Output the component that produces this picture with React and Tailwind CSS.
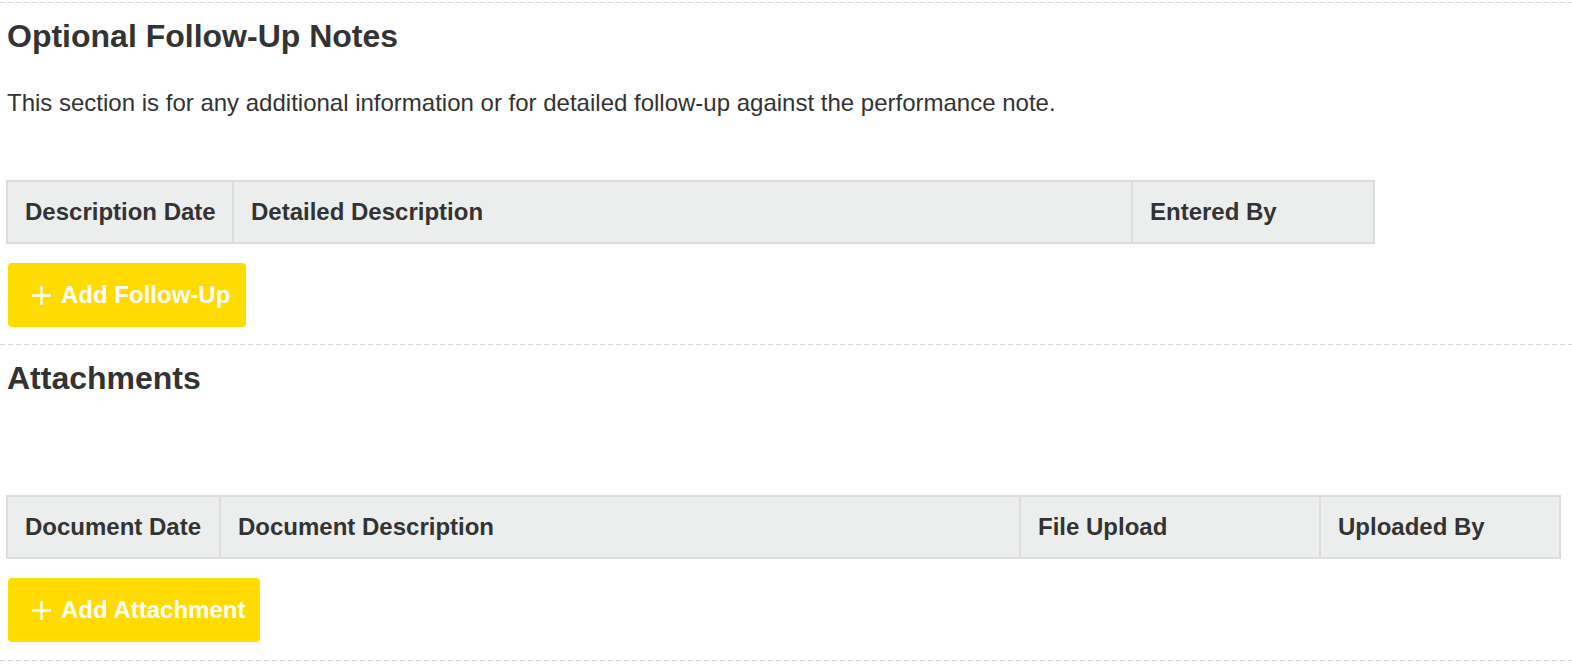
import React from 'react';

const followUpCols = [
    { label: 'Description Date', width: 'w-[226px]' },
    { label: 'Detailed Description', width: 'w-[899px]' },
    { label: 'Entered By', width: 'w-[242px]' },
];

const attachmentCols = [
    { label: 'Document Date', width: 'w-[213px]' },
    { label: 'Document Description', width: 'w-[800px]' },
    { label: 'File Upload', width: 'w-[300px]' },
    { label: 'Uploaded By', width: 'w-[240px]' },
];

const PlusIcon = () => (
    <svg width="21" height="21" viewBox="0 0 21 21" className="shrink-0">
        <path d="M10.5 1v19M1 10.5h19" stroke="#ffffff" strokeWidth="2.4" fill="none" />
    </svg>
);

// dashed separator between sections
const Divider = () => (
    <div className="h-px w-full bg-[repeating-linear-gradient(to_right,#d6d6de_0_5px,transparent_5px_8px)]" />
);

const HeaderTable = ({ columns, tableWidth }) => (
    <table className={`ml-[6px] border-collapse border-2 border-[#dddddd] table-fixed ${tableWidth}`}>
        <thead>
            <tr className="bg-[#eceeed] h-[62px]">
                {columns.map((col) => (
                    <th
                        key={col.label}
                        className={`${col.width} border-2 border-[#dddddd] px-[17px] text-left align-middle text-[24px] font-bold text-[#333333] whitespace-nowrap`}
                    >
                        {col.label}
                    </th>
                ))}
            </tr>
        </thead>
    </table>
);

const AddButton = ({ label, width }) => (
    <button
        type="button"
        className={`ml-[8px] flex h-[64px] items-center gap-[9px] rounded-[4px] bg-[#ffdb00] pl-[23px] text-[24px] font-bold text-white ${width}`}
    >
        <PlusIcon />
        <span>{label}</span>
    </button>
);

export default function App() {
    return (
        <div className="min-h-screen bg-white pt-[2px] text-[#333333] font-['Liberation_Sans',Arial,sans-serif]">
            <Divider />
            {/* Follow-up notes */}
            <section className="pb-[17px]">
                <h2 className="ml-[7px] mt-[16px] text-[32px] leading-[34px] font-bold">Optional Follow-Up Notes</h2>
                <p className="ml-[7px] mt-[33px] text-[24px] leading-[34px]">
                    This section is for any additional information or for detailed follow-up against the performance note.
                </p>
                <div className="mt-[60px]">
                    <HeaderTable columns={followUpCols} tableWidth="w-[1367px]" />
                </div>
                <div className="mt-[19px]">
                    <AddButton label="Add Follow-Up" width="w-[238px]" />
                </div>
            </section>
            <Divider />

            {/* Attachments */}
            <section className="pb-[18px]">
                <h2 className="ml-[7px] mt-[16px] text-[32px] leading-[34px] font-bold">Attachments</h2>
                <div className="mt-[100px]">
                    <HeaderTable columns={attachmentCols} tableWidth="w-[1553px]" />
                </div>
                <div className="mt-[19px]">
                    <AddButton label="Add Attachment" width="w-[252px]" />
                </div>
            </section>
            <Divider />
        </div>
    );
}
